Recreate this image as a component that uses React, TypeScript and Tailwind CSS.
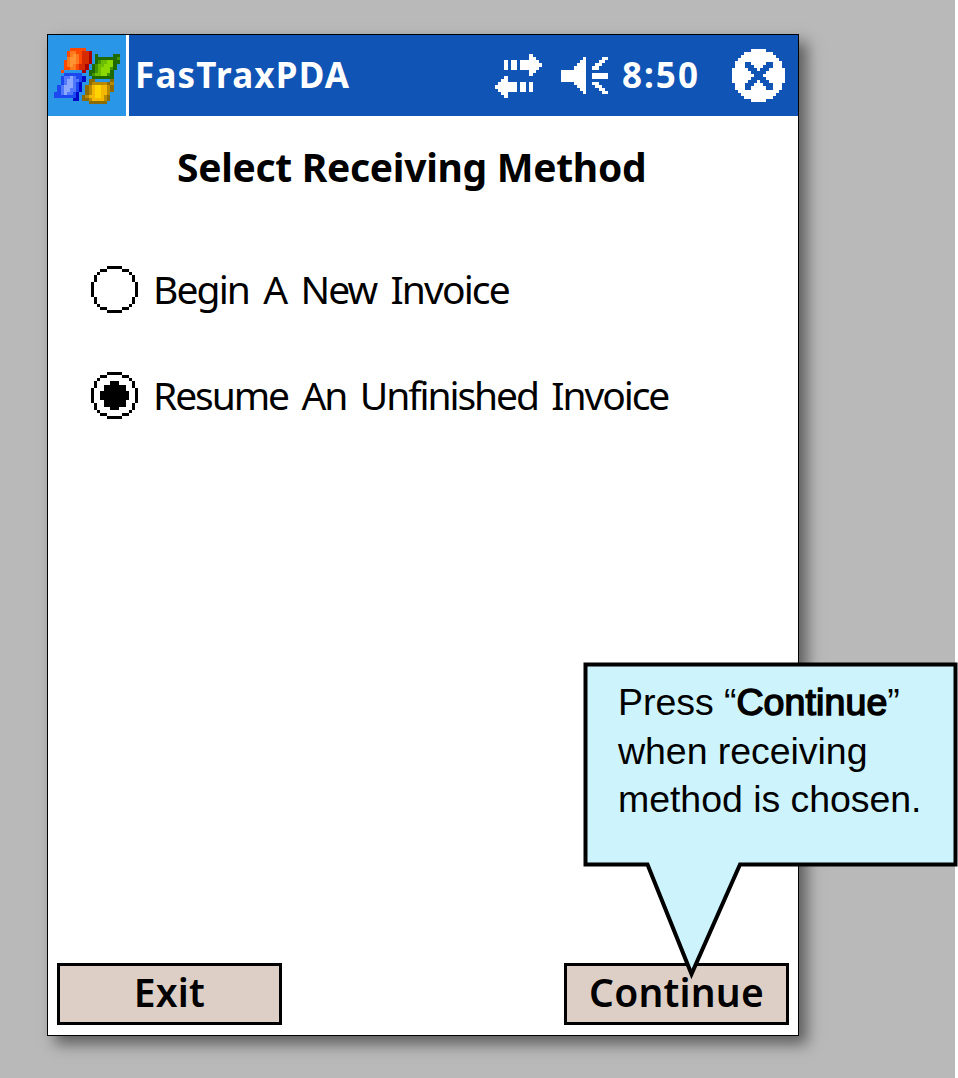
import type { ReactNode } from "react";

type Palette = Record<string, string>;

const FLAG_COLORS: Palette = {
  r: "#ff4800",
  o: "#ff7a1c",
  O: "#ff9433",
  m: "#d62a00",
  d: "#a80000",
  g: "#1f6a00",
  G: "#3f9400",
  l: "#6cbc00",
  L: "#8ad800",
  b: "#1c48f0",
  c: "#5078ff",
  C: "#8ca8ff",
  n: "#0008c8",
  y: "#8c6c00",
  k: "#b88a00",
  Y: "#f4b800",
  Z: "#ffd400",
};

const FLAG = [
  ".....rrrrr...........",
  "....roorrmmd.........",
  "....roOormmd.g.....gg",
  "....oOOormmd.gggggggG",
  "...roOOormmd.gGllLLgg",
  "...roOormmd.gGllLLLg.",
  "...rroormmd.gGlLLLGg.",
  "..r......d.ggGlLLLg..",
  "...bbbbbb..gGllLLGg..",
  "..bccCcbbn..ggggggg..",
  "..bcCCccbn.yy.....y..",
  "..bcCCcbn..ykkkkkyk..",
  ".bcCCCcbn.ykYZZYYky..",
  ".bcCCccbn.ykYZZYYky..",
  "bbcCccbn..ykYZZYYk...",
  "bbbbbbbn.ykYYZZYky...",
  "......nn.yykYYYYky...",
  "...........yyyyyy....",
];

const WHITE: Palette = { "#": "#ffffff" };

const SYNC = [
  "...........#...",
  "...........##..",
  "...#.##.######.",
  "...#.##.#######",
  "...#.##.######.",
  "...........##..",
  "...........#...",
  "...#...........",
  "..##...........",
  ".######.##.#...",
  "#######.##.#...",
  ".######.##.#...",
  "..##...........",
  "...#...........",
];

const SPEAKER = [
  ".......#.....##",
  "......##....##.",
  ".....###...##..",
  "....####..##...",
  "########.......",
  "########..#####",
  "########..#####",
  "########.......",
  "....####..##...",
  ".....###...##..",
  "......##....##.",
  ".......#.....##",
];

const CLOSE = [
  "......#####......",
  "....#########....",
  "...###########...",
  "..#############..",
  ".###..#####..###.",
  ".###...###...###.",
  "#####...#...#####",
  "######.....######",
  "#######...#######",
  "######.....######",
  "#####...#...#####",
  ".###...###...###.",
  ".###..#####..###.",
  "..#############..",
  "...###########...",
  "....#########....",
  "......#####......",
];

const RADIO = [
  ".....#####.....",
  "...##.....##...",
  "..#.........#..",
  ".#...........#.",
  ".#...........#.",
  "#.............#",
  "#.............#",
  "#.............#",
  "#.............#",
  "#.............#",
  ".#...........#.",
  ".#...........#.",
  "..#.........#..",
  "...##.....##...",
  ".....#####.....",
];

const DOT = [
  "...###...",
  ".#######.",
  ".#######.",
  "#########",
  "#########",
  "#########",
  ".#######.",
  ".#######.",
  "...###...",
];

const BLACK: Palette = { "#": "#000000" };

function cells(rows: string[], palette: Palette, dx = 0, dy = 0) {
  return rows.flatMap((row, y) =>
    [...row].map((ch, x) =>
      palette[ch] ? <rect key={`${x}-${y}`} x={x + dx} y={y + dy} width="1.02" height="1.02" fill={palette[ch]} /> : null
    )
  );
}

function Bitmap({ rows, palette, className }: { rows: string[]; palette: Palette; className: string }) {
  return (
    <svg
      viewBox={`0 0 ${rows[0].length} ${rows.length}`}
      className={`shrink-0 ${className}`}
      shapeRendering="crispEdges"
      aria-hidden
    >
      {cells(rows, palette)}
    </svg>
  );
}

function Radio({ checked, children, spacing }: { checked?: boolean; children: ReactNode; spacing: string }) {
  return (
    <div role="radio" aria-checked={!!checked} className="flex h-[47px] items-center">
      <svg viewBox="0 0 15 15" className="size-[47px] shrink-0" shapeRendering="crispEdges" aria-hidden>
        {cells(RADIO, BLACK)}
        {checked && <g>{cells(DOT, BLACK, 3, 3)}</g>}
      </svg>
      <span className={`-mt-[2px] ml-[15px] whitespace-nowrap text-[39px] leading-[47px] ${spacing}`}>{children}</span>
    </div>
  );
}

function PdaButton({ children }: { children: ReactNode }) {
  return (
    <button className="flex h-[62px] w-[225px] items-center justify-center border-[3px] border-black bg-[#ddcfc6] pb-[5px] text-[39px] font-semibold leading-none tracking-[0.2px]">
      {children}
    </button>
  );
}

function Callout() {
  return (
    <div className="absolute left-[583px] top-[662px] h-[318px] w-[375px]">
      <svg viewBox="0 0 375 318" className="absolute inset-0 h-full w-full" aria-hidden>
        <path
          d="M2.5 2.5H372.5V202.5H157L108.5 312L64.5 202.5H2.5Z"
          fill="#cdf4fd"
          stroke="#000"
          strokeWidth="4"
          strokeMiterlimit="10"
        />
      </svg>
      <p className="relative whitespace-nowrap pl-[35px] pt-[16px] font-['Liberation_Sans',Arial,sans-serif] text-[37.5px] leading-[48.7px] tracking-[-0.05px] text-black">
        Press “<span className="tracking-[0.1px] [-webkit-text-stroke:1.5px_#000]">Continue</span>”
        <br />
        when receiving
        <br />
        method is chosen.
      </p>
    </div>
  );
}

export default function App() {
  return (
    <div className="relative h-[1078px] w-[958px] overflow-hidden bg-white font-['Noto_Sans',sans-serif] text-black">
      <div className="h-full w-[955px] bg-[#b9b9b9] pl-[47px] pt-[34px]">
        <div className="flex h-[1002px] w-[752px] flex-col border border-black bg-white shadow-[8px_8px_14px_rgba(0,0,0,0.5)]">
          <header className="flex h-[81px] shrink-0 items-center bg-[#1054b5] text-white">
            <div className="flex h-full w-[81px] shrink-0 border-r-[3px] border-white bg-[#2996e7] pl-[6px] pt-[13px]">
              <Bitmap rows={FLAG} palette={FLAG_COLORS} className="h-[56px] w-[66px]" />
            </div>
            <span className="ml-[6px] w-[360px] text-[35px] font-bold tracking-[1.2px]">FasTraxPDA</span>
            <Bitmap rows={SYNC} palette={WHITE} className="h-[44px] w-[47px]" />
            <Bitmap rows={SPEAKER} palette={WHITE} className="ml-[19px] h-[37.5px] w-[47px]" />
            <span className="ml-[14px] w-[110px] text-[35px] font-bold tracking-[2px]">8:50</span>
            <Bitmap rows={CLOSE} palette={WHITE} className="size-[53px]" />
          </header>

          <main className="flex flex-1 flex-col">
            <h1 className="mt-[26px] whitespace-nowrap pl-[129px] text-[39px] font-bold leading-[50px] tracking-[-0.3px]">
              Select Receiving Method
            </h1>
            <div role="radiogroup" className="mt-[74px] flex flex-col gap-[59px] pl-[43px]">
              <Radio spacing="tracking-[-1.9px] [word-spacing:6px]">Begin A New Invoice</Radio>
              <Radio checked spacing="tracking-[-2.1px] [word-spacing:5.5px]">
                Resume An Unfinished Invoice
              </Radio>
            </div>
          </main>

          <footer className="flex justify-between px-[9px] pb-[10px]">
            <PdaButton>Exit</PdaButton>
            <PdaButton>Continue</PdaButton>
          </footer>
        </div>
      </div>
      <Callout />
    </div>
  );
}
